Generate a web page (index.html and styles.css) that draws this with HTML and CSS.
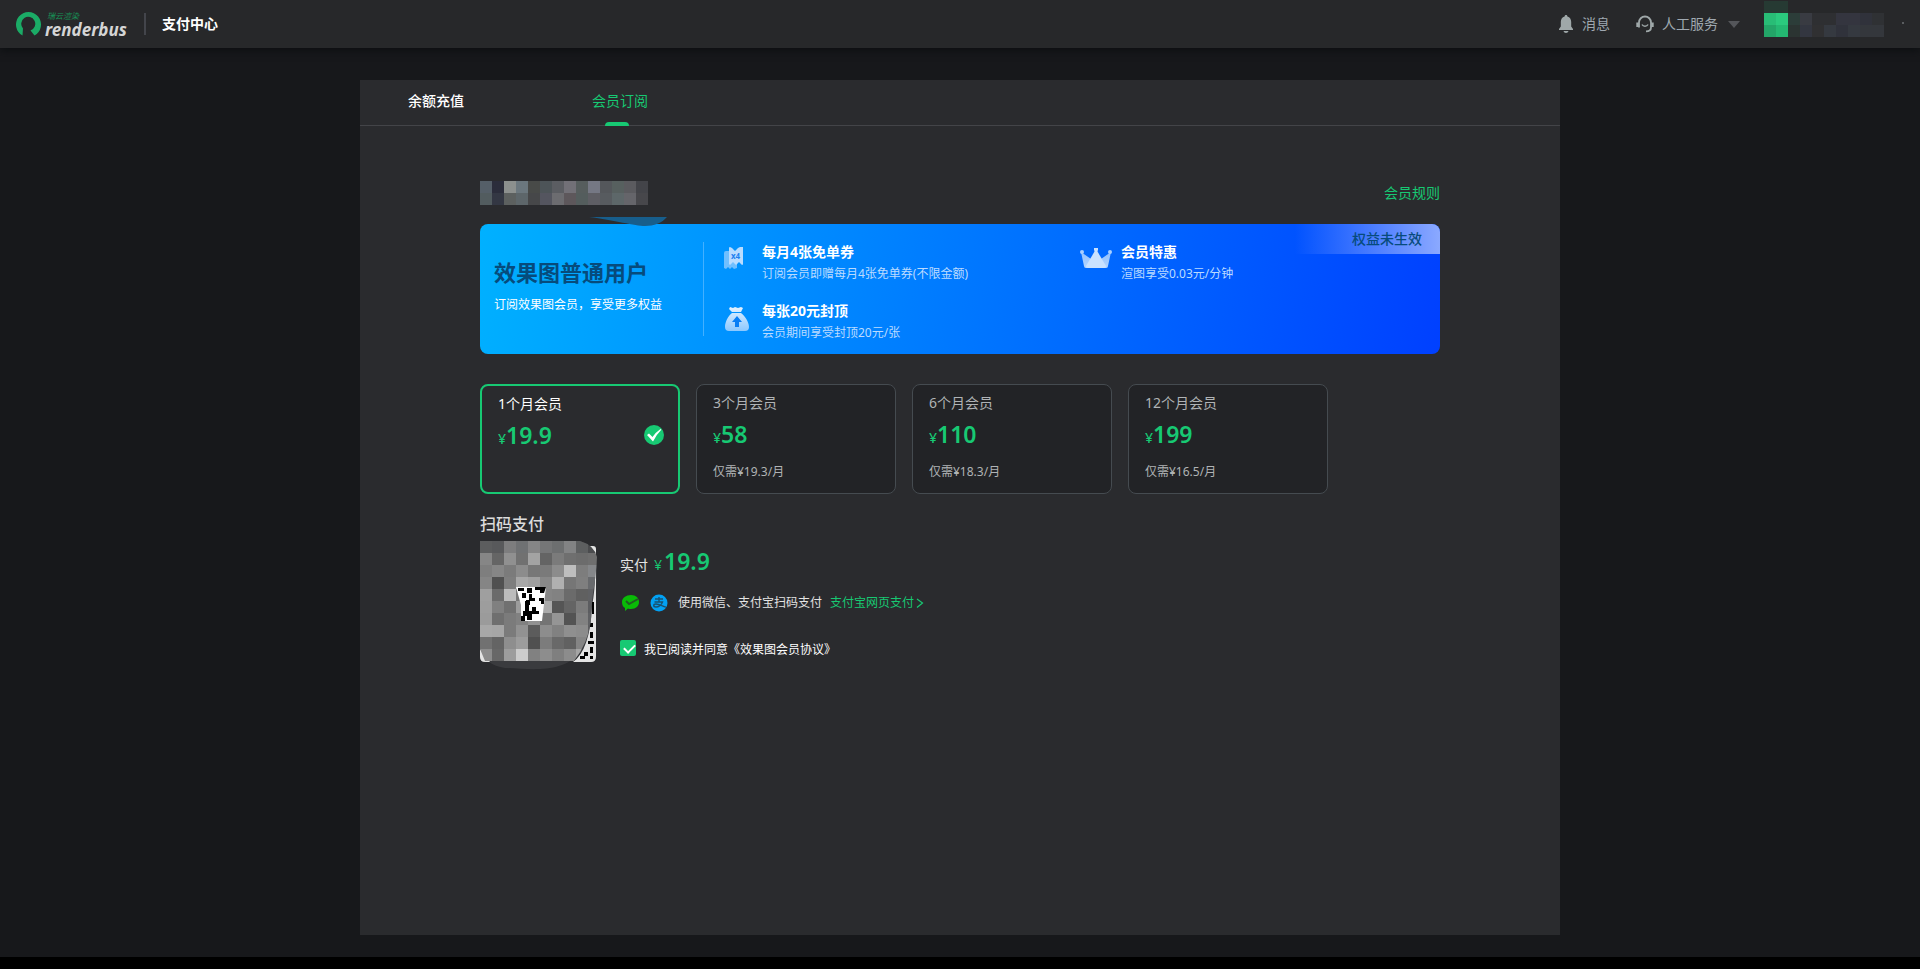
FILE: index.html
```html
<!DOCTYPE html>
<html lang="zh-CN">
<head>
<meta charset="utf-8">
<title>支付中心</title>
<link rel="stylesheet" href="styles.css">
</head>
<body>
<header class="topbar">
  <a class="logo" href="#">
    <svg class="logo-mark" width="26" height="26" viewBox="0 0 26 26" aria-hidden="true"><path fill="#1bab66" d="M6.500 24.500 A12.500 12.500 0 1 1 18.500 24.500 L14.500 19.500 A7 7 0 1 0 7 17.500 Z"/></svg>
    <span class="logo-text"><span class="logo-cn">瑞云渲染</span><span class="logo-en">renderbus</span></span>
  </a>
  <h1 class="topbar-title">支付中心</h1>
  <nav class="topbar-nav">
    <a class="nav-item" href="#">
      <svg width="16" height="18" viewBox="0 0 16 18" aria-hidden="true"><path fill="#9fa8a9" d="M8 0c.9 0 1.400.6 1.400 1.500C12 2.300 13.200 4.500 13.200 7v4.500L15 14v1H1v-1l1.800-2.500V7c0-2.500 1.200-4.700 3.800-5.500C6.600.6 7.100 0 8 0zM5.500 16h5c-.3 1.200-1.300 2-2.500 2s-2.200-.8-2.500-2z"/></svg>
      消息</a>
    <button class="nav-item nav-service" type="button">
      <svg width="18" height="18" viewBox="0 0 18 18" fill="none" stroke="#9fa8a9" stroke-width="1.800" aria-hidden="true"><path d="M3 12.500V7.500a6 6 0 0 1 12 0v5c0 2.500-2 3.800-5 3.800"/><path stroke-width="2.600" d="M1.600 7.500v4.500M16.400 7.500v4.500"/><path stroke-width="1.500" d="M6 9.500c1.200 2.300 4.800 2.300 6 0"/></svg>
      人工服务
      <svg class="caret" width="12" height="7" viewBox="0 0 12 7" aria-hidden="true"><path fill="#54565a" d="M0 0h12L6 7z"/></svg>
    </button>
    <button class="account" type="button" aria-label="账户">
      <svg width="144" height="40" viewBox="0 0 144 40" shape-rendering="crispEdges" aria-hidden="true">
        <g fill="#263a33"><path d="M0 1h24v12H0z"/></g>
        <path fill="#2bca7e" d="M12 13h12v12H12z"/><path fill="#28bd76" d="M0 13h12v12H0z"/>
        <path fill="#23a568" d="M0 25h12v12H0z"/><path fill="#24b872" d="M12 25h12v12H12z"/>
        <path fill="#2c3d39" d="M24 13h12v12H24z"/><path fill="#2b3432" d="M24 25h12v12H24z"/>
        <path fill="#393b42" d="M36 13h12v12H36z"/><path fill="#333640" d="M36 25h12v12H36z"/>
        <path fill="#2e2f32" d="M48 13h24v12H48z"/><path fill="#303032" d="M48 25h12v12H48z"/>
        <path fill="#353940" d="M60 25h12v12H60zM84 25h12v12H84z"/><path fill="#34353f" d="M72 13h24v12H72z"/><path fill="#30323b" d="M72 25h12v12H72zM96 13h12v12H96z"/>
        <path fill="#2f3134" d="M108 13h12v12h-12z"/><path fill="#34373c" d="M96 25h24v12H96z"/>
        <path fill="#5a5d60" d="M138 22h2v2h-2z"/>
      </svg>
    </button>
  </nav>
</header>

<main class="panel">
  <nav class="tabs">
    <a class="tab" href="#">余额充值</a>
    <a class="tab tab-active" href="#" aria-current="page">会员订阅</a>
  </nav>
  <div class="content">
    <div class="account-row">
      <svg width="168" height="24" viewBox="0 0 14 2" shape-rendering="crispEdges" aria-hidden="true" data-cells="555f68 2b2d3b 8c908e 6b777e 484a48 4d5458 5b5d62 727077 565d5d 757884 54575b 57605f 5b5b5f 434449/525c5f 333743 5c605f 5d666a 464749 54555f 6c6c70 5d575b 545d5d 5e5e64 575b5f 5d6769 65656a 47474b"></svg>
      <a class="green-link" href="#">会员规则</a>
    </div>

    <section class="banner">
      <svg class="banner-tail" width="80" height="10" viewBox="0 0 80 10" aria-hidden="true"><path fill="#175e8c" d="M0 0h78C73 6 65 9 56 9 46 9 25 3 0 0z"/></svg>
      <div class="banner-user">
        <h2 class="banner-title">效果图普通用户</h2>
        <p class="banner-sub">订阅效果图会员，享受更多权益</p>
      </div>
      <ul class="benefits">
        <li class="benefit">
          <svg class="benefit-icon" width="28" height="26" viewBox="0 0 28 26" aria-hidden="true"><path fill="#70bfff" d="M2 7q0-2 2-2h11v17l-3 1-2-2-2 2-2-2-2 2-2-1z"/><path fill="#b9dcff" d="M7 2q0-1 1-1l2 1 3 3 3-3 2-1h3v17q0 1-1 1l-3-3-3 3-3-3-3 3-1-1z"/><text x="9" y="13" font-size="8" font-weight="700" fill="#1e80f0">x4</text></svg>
          <div><h3 class="benefit-name">每月4张免单券</h3><p class="benefit-desc">订阅会员即赠每月4张免单券(不限金额)</p></div>
        </li>
        <li class="benefit">
          <svg class="benefit-icon" width="28" height="26" viewBox="0 0 28 26" aria-hidden="true"><defs><linearGradient id="crown" x2="0" y2="1"><stop stop-color="#8fc0ff"/><stop offset="1" stop-color="#b4d6ff"/></linearGradient></defs><path fill="url(#crown)" d="M0 6l10 7h10l10-7-3 14q0 2-2 2H5q-2 0-2-2z"/><path fill="#c9e2ff" d="M15 3l10 17q0 2-2 2H7q-2 0-2-2z"/><circle cx="1" cy="6" r="2" fill="#a8cfff"/><circle cx="29" cy="6" r="2" fill="#a8cfff"/><path fill="#c9e2ff" d="M13 2h4v2l-1 2h-2l-1-2z"/></svg>
          <div><h3 class="benefit-name">会员特惠</h3><p class="benefit-desc">渲图享受0.03元/分钟</p></div>
        </li>
        <li class="benefit">
          <svg class="benefit-icon" width="28" height="26" viewBox="0 0 28 26" aria-hidden="true"><defs><linearGradient id="bag" x2="0" y2="1"><stop stop-color="#e4f2ff"/><stop offset="1" stop-color="#8cc8ff"/></linearGradient></defs><path fill="url(#bag)" d="M8 2l3 1 2-1 3 1 3-1 2 1-2 4h-9L7 4zM10 8h9c4 3 8 9 8 14q0 4-4 4H7q-4 0-4-4c0-5 3-11 7-14z"/><path fill="#087ef5" d="M15 11l5 6h-3v5h-4v-5h-3z"/></svg>
          <div><h3 class="benefit-name">每张20元封顶</h3><p class="benefit-desc">会员期间享受封顶20元/张</p></div>
        </li>
      </ul>
      <span class="banner-badge">权益未生效</span>
    </section>

    <section class="plans">
      <button class="plan plan-active" type="button" aria-pressed="true">
        <span class="plan-name">1个月会员</span>
        <span class="plan-price"><small>¥</small>19.9</span>
        <svg class="plan-check" width="20" height="20" viewBox="0 0 20 20" aria-hidden="true"><circle cx="10" cy="10" r="10" fill="#17c973"/><path fill="#fff" d="M3 10l2-1.500 3.500 3.500Q12 7 16.500 4l.8.7Q12 10 9 16.500z"/></svg>
      </button>
      <button class="plan" type="button"><span class="plan-name">3个月会员</span><span class="plan-price"><small>¥</small>58</span><span class="plan-avg">仅需¥19.3/月</span></button>
      <button class="plan" type="button"><span class="plan-name">6个月会员</span><span class="plan-price"><small>¥</small>110</span><span class="plan-avg">仅需¥18.3/月</span></button>
      <button class="plan" type="button"><span class="plan-name">12个月会员</span><span class="plan-price"><small>¥</small>199</span><span class="plan-avg">仅需¥16.5/月</span></button>
    </section>

    <h2 class="pay-title">扫码支付</h2>
    <section class="pay">
      <svg class="qr" width="118" height="130" viewBox="0 0 118 130" role="img" aria-label="支付二维码">
        <path fill="#3a3b3e" d="M8 0Q50-3 100 0q18 5 17 30c-2 40-3 62-14 80-22 23-50 18-78 17Q5 124 0 108V4z"/>
        <path fill="#e4e4e4" d="M0 108v8q0 5 5 5h5zM109 5h4q3 0 3 3v108q0 5-5 5H93q17-12 19-56 4-20 3-47z"/>
        <path fill="#000" d="M112 61h2v12h-2zM110 82h3v4h-3zM110 91h3v6h-3zM108 100h6v3h-6zM110 106h3v6h-3zM104 111h4v4h-4zM110 115h3v3h-3zM100 115h5v3h-5z"/>
        <clipPath id="qr-clip"><path d="M3 0h97q14 4 17 16-1 20-4 36-2 17-2 28-3 22-17 40H5l-5-12V0z"/></clipPath>
        <g clip-path="url(#qr-clip)"><svg width="120" height="120" viewBox="0 0 10 10" shape-rendering="crispEdges" data-cells="5c5d5e 58595b 7d7d7e 6f7173 858586 757677 6d6f70 828384 5d5f60 4b4c4e/868686 656565 909090 717171 a3a3a3 646464 7b7b7b 6f6f6f 6c6c6c 6f6f6f/7e7e7e 868686 7b7b7b 8c8c8c 777777 7a7a7a 8c8c8c bebebe 7d7d7d 85878a/858585 505050 7e7e7e a7a7a7 a0a0a0 888888 b0b0b0 767676 7f7f7f 686a6d/9f9f9f 6b6b6b bcbcbc 777777 8a8a8a 858585 828282 6b6b6b 606060 606164/9d9d9d 808080 707070 9c9c9c 999999 aaaaaa 555555 646464 7c7c7c 5c5d60/9b9b9b 6f6f6f 7b7b7b 818181 929292 747474 959595 535353 828282 606164/a8a8a8 a6a6a6 7b7b7b 929292 5c5c5c 8d8d8d 818181 8f8f8f 8c8c8c 5d5d60/717171 646464 8e8e8e 9c9c9c 505050 7c7c7c 696969 616161 858585 6a6b6e/8c8c8c 676767 9d9d9d cccccc 818181 8d8d8d 7f7f7f 8c8c8c a5a5a5 b4b4b4"></svg></g>
        <path fill="#fff" d="M36 46h30l-4 34H41V64z"/>
        <path fill="#000" d="M38 47h6v3h-6zM47 47h5v5h-5zM55 46h11l-2 6h-4v-3h-5zM42 52h4v5h-4zM49 53h3v4h3v3h-5v4h-4v-5h3zM45 60h4v10h3v-4h4v4h3v3h-7v6h-5v-4h-4v-5h2zM59 57h5v6h-3v-3h-2zM41 75h4v5h-4z"/>
      </svg>
      <div class="pay-info">
        <p class="pay-total">实付<small>¥</small><strong>19.9</strong></p>
        <p class="pay-methods">
          <svg width="20" height="18" viewBox="0 0 20 18" aria-hidden="true"><path fill="#09bb07" d="M11 1c5 0 8 3 8 7s-3 7-8 7q-2 0-3-.5L5 17v-3c-2-1-3-3-3-6 0-4 4-7 9-7z"/><path fill="none" stroke="#205d22" stroke-width="2" d="M6 7l3 3 9-5"/></svg>
          <svg width="18" height="18" viewBox="0 0 18 18" aria-hidden="true"><circle cx="9" cy="9" r="8.500" fill="#02a1f4"/><path fill="none" stroke="#19516f" stroke-width="1.400" d="M5 5h8M9 3v5M4.500 8h8c-1 3-4 5-6.500 5-3 0-3-3 0-3 3 0 6 2 10 3.200"/></svg>
          <span class="pay-hint">使用微信、支付宝扫码支付</span>
          <a class="pay-link" href="#">支付宝网页支付<svg width="8" height="12" viewBox="0 0 8 12" fill="none" stroke="#17c973" stroke-width="1.200" aria-hidden="true"><path d="M1 2l5.500 4L1 10.500"/></svg></a>
        </p>
        <label class="agree"><input class="agree-box" type="checkbox" checked>我已阅读并同意《效果图会员协议》</label>
      </div>
    </section>
  </div>
</main>
<footer class="footer"></footer>
<script src="app.js"></script>
</body>
</html>
```
FILE: styles.css
```css
* { box-sizing: border-box; }
body {
  margin: 0;
  min-height: 100vh;
  display: flex;
  flex-direction: column;
  background: #17181b;
  color: #fff;
  font: 14px/20px "Noto Sans", "Noto Sans CJK SC", sans-serif;
}
h1, h2, h3, p, ul { margin: 0; padding: 0; }
ul { list-style: none; }
a { color: inherit; text-decoration: none; }
button { font: inherit; color: inherit; background: none; border: 0; padding: 0; cursor: pointer; }
svg { display: block; flex: none; }

.topbar {
  display: flex;
  align-items: center;
  height: 48px;
  padding: 0 12px 0 16px;
  background: #27282a;
  box-shadow: 0 2px 8px #0b0e10;
}
.logo { display: flex; align-items: center; gap: 3px; width: 130px; height: 22px; border-right: 2px solid #43454b; }
.logo-text { display: flex; flex-direction: column; font-style: italic; font-weight: 700; }
.logo-cn { padding-left: 2px; color: #179257; font-size: 8px; line-height: 10px; font-weight: 400; }
.logo-en { color: #d5d5d5; font-size: 17px; line-height: 17px; }
.topbar-title { margin-left: 16px; font-size: 14px; font-weight: 700; }
.topbar-nav { display: flex; align-items: center; margin-left: auto; color: #9fa8b0; }
.nav-item { display: flex; align-items: center; gap: 8px; }
.nav-service { margin-left: 26px; }
.caret { margin-left: 2px; }
.account { margin-left: 24px; height: 48px; padding-bottom: 8px; }

.panel {
  flex: 1;
  width: 1200px;
  max-width: 100%;
  margin: 32px auto 22px;
  background: #2a2b2e;
}
.tabs { display: flex; gap: 128px; height: 46px; padding: 0 48px; border-bottom: 1px solid #434448; }
.tab { position: relative; padding-top: 11px; font-weight: 500; }
.tab-active { color: #17c973; font-weight: 400; }
.tab-active::after {
  content: "";
  position: absolute;
  left: 13px;
  bottom: -1px;
  width: 24px;
  height: 4px;
  border-radius: 4px 4px 0 0;
  background: #17c973;
}
.content { padding: 55px 120px; }
.account-row { display: flex; justify-content: space-between; align-items: center; }
.green-link { color: #17c973; }

.banner {
  position: relative;
  display: flex;
  align-items: center;
  height: 130px;
  margin-top: 19px;
  border-radius: 8px;
  background: linear-gradient(100deg, #00b1ff, #0040ff);
}
.banner-tail { position: absolute; left: 109px; top: -7px; }
.banner-user {
  display: flex;
  flex-direction: column;
  justify-content: center;
  gap: 8px;
  width: 224px;
  height: 94px;
  padding: 0 0 8px 14px;
  border-right: 1px solid #43b0ff;
}
.banner-title { color: #064b7c; font-size: 22px; line-height: 32px; }
.banner-sub { font-size: 12px; line-height: 18px; }
.benefits {
  flex: 1;
  display: grid;
  grid-template-columns: 359px 1fr;
  gap: 17px 0;
  padding: 6px 0 0 18px;
}
.benefit { display: flex; gap: 12px; }
.benefit-icon { width: 28px; margin-top: 4px; overflow: visible; }
.benefit-name { font-size: 14px; line-height: 20px; }
.benefit-desc { margin-top: 2px; color: #bbdbff; font-size: 12px; line-height: 20px; }
.banner-badge {
  position: absolute;
  top: 0;
  right: 0;
  width: 145px;
  padding: 5px 18px;
  border-radius: 0 8px 0 0;
  background: linear-gradient(90deg, transparent, #8ba9ff);
  color: #064b7c;
  font-weight: 500;
  text-align: right;
}

.plans { display: flex; gap: 16px; margin-top: 30px; }
.plan {
  position: relative;
  display: flex;
  flex-direction: column;
  align-items: flex-start;
  width: 200px;
  height: 110px;
  padding: 8px 16px;
  border: 1px solid #454b50;
  border-radius: 8px;
  background: #222326;
  color: #b0b3b5;
}
.plan-active { border: 2px solid #17c973; background: none; color: #fff; }
.plan-price { margin-top: 6px; color: #17c973; font-size: 23px; line-height: 30px; font-weight: 600; }
.plan-price small { font-size: 14px; font-weight: 500; }
.plan-avg { margin-top: 10px; font-size: 12px; line-height: 18px; }
.plan-check { position: absolute; right: 14px; top: 39px; }

.pay-title { margin-top: 18px; color: #dcdcdc; font-size: 16px; line-height: 24px; font-weight: 500; }
.pay { display: flex; gap: 22px; margin-top: 5px; }
.pay-info { color: #e4e4e4; font-size: 12px; line-height: 18px; }
.pay-total { display: flex; align-items: baseline; gap: 6px; margin-top: 3px; font-size: 14px; line-height: 34px; }
.pay-total small { color: #17c973; font-size: 14px; }
.pay-total strong { margin-left: -4px; color: #17c973; font-size: 23px; font-weight: 600; }
.pay-methods { display: flex; align-items: center; gap: 10px; margin-top: 12px; }
.pay-link { display: flex; align-items: center; gap: 2px; margin-left: -2px; color: #17c973; }
.agree { display: flex; align-items: flex-start; gap: 8px; margin-top: 28px; color: #fff; line-height: 20px; }
.agree-box {
  appearance: none;
  width: 16px;
  height: 16px;
  margin: 0;
  border-radius: 2px;
  background: #17c973;
}
.agree-box:checked::after {
  content: "";
  display: block;
  width: 9px;
  height: 5px;
  margin: 4px 0 0 4px;
  border: solid #fff;
  border-width: 0 0 2px 2px;
  transform: rotate(-45deg);
}
.footer { height: 12px; background: #000; }
```
FILE: app.js
```js
// Fills each masked area with its grid of coloured cells.
document.querySelectorAll("svg[data-cells]").forEach(function (svg) {
  svg.dataset.cells.split("/").forEach(function (row, y) {
    row.split(" ").forEach(function (color, x) {
      var cell = document.createElementNS("http://www.w3.org/2000/svg", "rect");
      cell.setAttribute("x", x);
      cell.setAttribute("y", y);
      cell.setAttribute("width", 1);
      cell.setAttribute("height", 1);
      cell.setAttribute("fill", "#" + color);
      svg.appendChild(cell);
    });
  });
});
```
